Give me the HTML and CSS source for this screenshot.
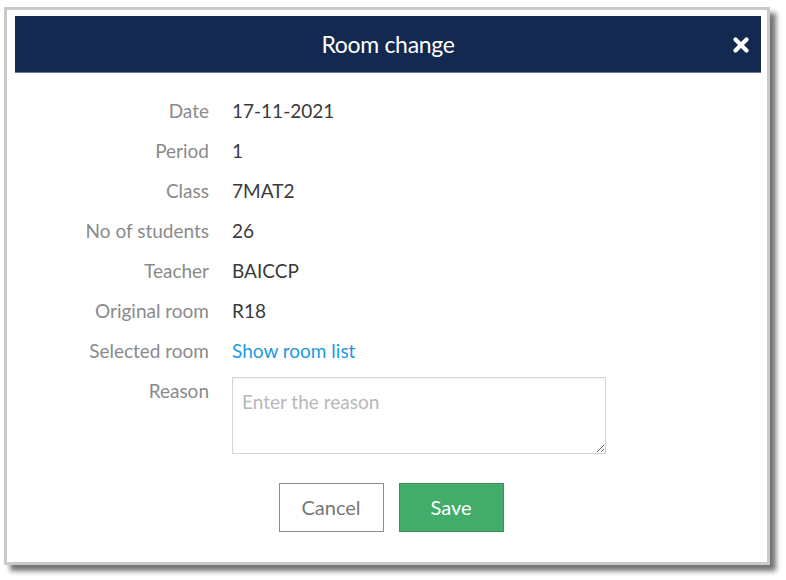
FILE: index.html
```html
<!DOCTYPE html>
<html>
<head>
<meta charset="utf-8">
<link rel="stylesheet" href="styles.css">
</head>
<body>
<div class="dialog">
  <div class="header">
    <span class="title">Room change</span>
    <svg class="close" width="16" height="16" viewBox="0 0 16 16">
      <path d="M2.5 2.5 L13.5 13.5 M13.5 2.5 L2.5 13.5" stroke="#fff" stroke-width="4.2" stroke-linecap="round"/>
    </svg>
  </div>
  <div class="form">
    <div class="label">Date</div><div class="value">17-11-2021</div>
    <div class="label">Period</div><div class="value">1</div>
    <div class="label">Class</div><div class="value">7MAT2</div>
    <div class="label">No of students</div><div class="value">26</div>
    <div class="label">Teacher</div><div class="value">BAICCP</div>
    <div class="label">Original room</div><div class="value">R18</div>
    <div class="label">Selected room</div><div class="value"><a class="link">Show room list</a></div>
    <div class="label">Reason</div><div class="value"><textarea class="reason" placeholder="Enter the reason"></textarea></div>
  </div>
  <div class="actions">
    <button class="btn cancel">Cancel</button>
    <button class="btn save">Save</button>
  </div>
</div>
</body>
</html>
```
FILE: styles.css
```css
html, body { margin: 0; padding: 0; background: #fff; }
body { font-family: Lato, "Open Sans", sans-serif; min-height: 580px; overflow: hidden; }
.dialog {
  margin: 7px 0 0 4px;
  width: 766px;
  height: 558px;
  box-sizing: border-box;
  border: 3px solid #cacaca;
  padding: 6px 6px 6px 8px;
  background: #fff;
  box-shadow: 6px 6px 5px rgba(0,0,0,0.55);
}
.header {
  height: 57px;
  box-sizing: border-box;
  background: #13294f;
  border-bottom: 1px solid #6b7891;
  position: relative;
  display: flex;
  align-items: center;
  justify-content: center;
}
.title { color: #fff; font-size: 23px; letter-spacing: -0.3px; }
.close { position: absolute; right: 12px; top: 21px; }
.form {
  display: grid;
  grid-template-columns: 194px 1fr;
  column-gap: 23px;
  grid-auto-rows: 40px;
  padding-top: 18px;
  font-size: 19px;
}
.label { color: #8a8a8a; text-align: right; line-height: 40px; }
.value { color: #3a3a3a; line-height: 40px; }
.link { color: #1e9ae3; cursor: pointer; }
.reason {
  display: block;
  margin-top: 6px;
  width: 374px;
  height: 77px;
  box-sizing: border-box;
  border: 1px solid #d4d4d4;
  box-shadow: inset 0 1px 2px rgba(0,0,0,0.06);
  font-family: Lato, sans-serif;
  font-size: 19px;
  padding: 12px 9px;
  resize: both;
}
.reason::placeholder { color: #b8b8b8; }
.actions {
  display: flex;
  justify-content: center;
  gap: 15px;
  margin-top: 72px;
  padding-left: 6px;
}
.btn {
  width: 105px;
  height: 49px;
  font-family: Lato, sans-serif;
  font-size: 20px;
  box-sizing: border-box;
  border-radius: 0;
  padding: 0 0 2px;
}
.cancel { background: #fff; color: #777; border: 1px solid #8c8c8c; }
.save { background: #43ac6a; color: #fff; border: 1px solid #3a8f5a; }
```
